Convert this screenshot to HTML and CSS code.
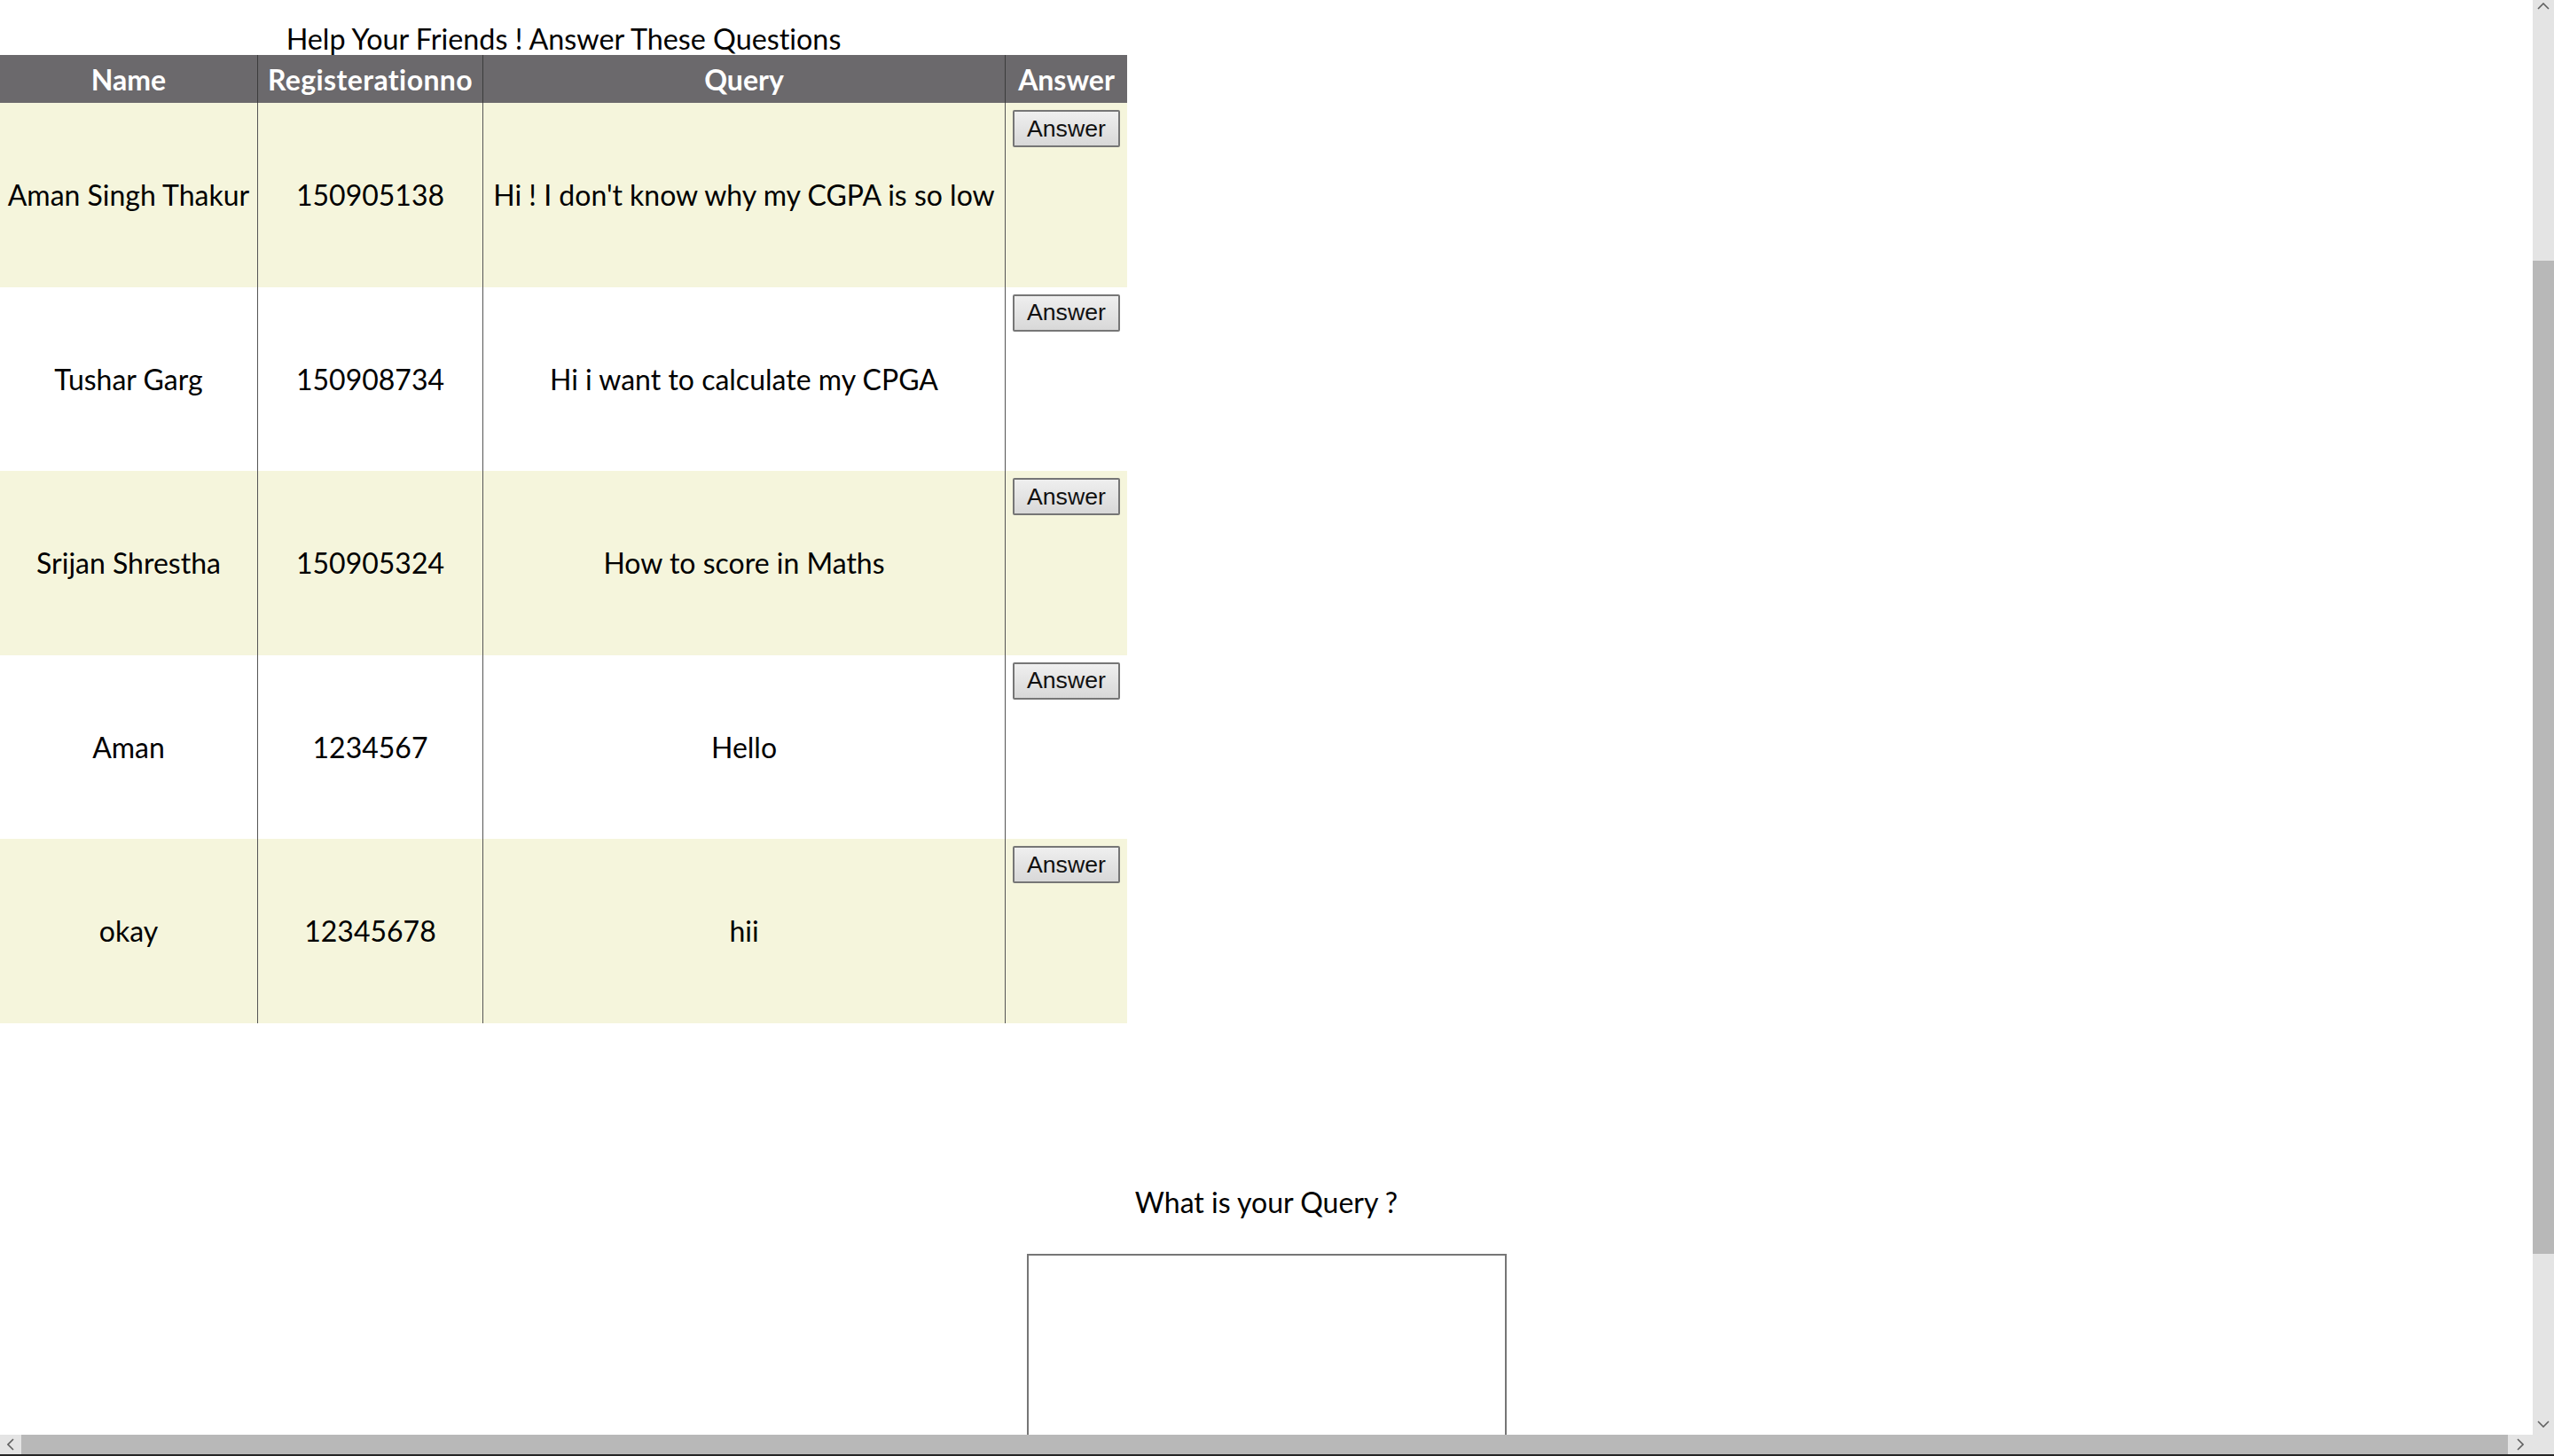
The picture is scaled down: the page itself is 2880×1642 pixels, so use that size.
FILE: index.html
```html
<!DOCTYPE html>
<html>
<head>
<meta charset="utf-8">
<title>Help Your Friends</title>
<link rel="stylesheet" href="styles.css">
</head>
<body>
<div class="main">
  <table class="questions">
    <caption>Help Your Friends ! Answer These Questions</caption>
    <thead>
      <tr>
        <th class="c-name">Name</th>
        <th class="c-reg">Registerationno</th>
        <th class="c-query">Query</th>
        <th class="c-ans">Answer</th>
      </tr>
    </thead>
    <tbody>
      <tr>
        <td>Aman Singh Thakur</td>
        <td>150905138</td>
        <td>Hi ! I don't know why my CGPA is so low</td>
        <td class="ans"><button class="btn" type="button">Answer</button></td>
      </tr>
      <tr>
        <td>Tushar Garg</td>
        <td>150908734</td>
        <td>Hi i want to calculate my CPGA</td>
        <td class="ans"><button class="btn" type="button">Answer</button></td>
      </tr>
      <tr>
        <td>Srijan Shrestha</td>
        <td>150905324</td>
        <td>How to score in Maths</td>
        <td class="ans"><button class="btn" type="button">Answer</button></td>
      </tr>
      <tr>
        <td>Aman</td>
        <td>1234567</td>
        <td>Hello</td>
        <td class="ans"><button class="btn" type="button">Answer</button></td>
      </tr>
      <tr>
        <td>okay</td>
        <td>12345678</td>
        <td>hii</td>
        <td class="ans"><button class="btn" type="button">Answer</button></td>
      </tr>
    </tbody>
  </table>

  <section class="ask">
    <p class="ask-title">What is your Query ?</p>
    <textarea class="ask-box"></textarea>
  </section>
</div>

<div class="vscroll">
  <svg class="arrow up" width="14" height="8" viewBox="0 0 14 8"><polyline points="1,7 7,1 13,7" fill="none" stroke="#606060" stroke-width="1.6"/></svg>
  <div class="vthumb"></div>
  <svg class="arrow down" width="14" height="8" viewBox="0 0 14 8"><polyline points="1,1 7,7 13,1" fill="none" stroke="#606060" stroke-width="1.6"/></svg>
</div>
<div class="hscroll">
  <div class="hbtn">
    <svg width="8" height="14" viewBox="0 0 8 14"><polyline points="7,1 1,7 7,13" fill="none" stroke="#606060" stroke-width="1.6"/></svg>
  </div>
  <div class="hthumb"></div>
  <div class="hbtn right">
    <svg width="8" height="14" viewBox="0 0 8 14"><polyline points="1,1 7,7 1,13" fill="none" stroke="#606060" stroke-width="1.6"/></svg>
  </div>
  <div class="corner"></div>
</div>
<div class="taskbar"></div>
</body>
</html>
```
FILE: styles.css
```css
html, body {
  margin: 0;
  padding: 0;
  background: #ffffff;
  overflow: hidden;
}

body {
  font-family: Lato, "Open Sans", sans-serif;
  font-size: 32px;
  color: #000;
  font-variant-ligatures: none;
}

.main {
  margin-right: 24px;
}

/* ---------- table ---------- */
.questions {
  width: 1271px;
  table-layout: fixed;
  border-collapse: separate;
  border-spacing: 0;
}

.questions caption {
  font-size: 32.3px;
  line-height: 36px;
  padding-top: 26px;
  text-align: center;
}

.questions th,
.questions td {
  box-sizing: border-box;
  padding: 0 8px;
  text-align: center;
  white-space: nowrap;
}

.questions th + th,
.questions td + td {
  border-left: 1px solid #555555;
}

.questions th {
  height: 54px;
  background: #6b696c;
  color: #ffffff;
  font-weight: 700;
  vertical-align: middle;
}

.questions th.c-reg {
  letter-spacing: 0.4px;
}

.questions th + th {
  border-left-color: #3c3c3c;
}

.c-name { width: 290px; }
.c-reg { width: 254px; }
.c-query { width: 589px; }
.c-ans { width: 138px; }

.questions td {
  height: 207.5px;
  vertical-align: middle;
}

.questions tbody tr:nth-child(odd) {
  background: #f5f5dc;
}

.questions td.ans {
  vertical-align: top;
  padding-top: 8px;
  text-align: left;
}

.btn {
  display: block;
  box-sizing: border-box;
  width: 121px;
  height: 42px;
  margin: 0;
  padding: 0 0 0 14px;
  border: 2px solid #767676;
  border-radius: 2px;
  background: linear-gradient(#efefef, #d8d8d8);
  font-family: "Liberation Sans", Arial, sans-serif;
  font-size: 26.67px;
  color: #111;
  text-align: left;
}

/* ---------- ask section ---------- */
.ask {
  display: flex;
  flex-direction: column;
  align-items: center;
  padding-top: 183px;
}

.ask-title {
  margin: 0;
  font-size: 32px;
  line-height: 38.4px;
}

.ask-box {
  display: block;
  box-sizing: border-box;
  width: 541px;
  height: 214px;
  margin-top: 39px;
  border: 2px solid #767676;
  background: #fff;
  resize: none;
}

/* ---------- fake browser scrollbars (overlay) ---------- */
.vscroll {
  position: fixed;
  top: 0;
  right: 0;
  width: 24px;
  height: 1618px;
  background: #e4e4e4;
}

.vthumb {
  position: absolute;
  left: 0;
  top: 294px;
  width: 24px;
  height: 1120px;
  background: #b8b8b8;
}

.arrow {
  position: absolute;
  left: 5px;
}
.arrow.up { top: 3px; }
.arrow.down { top: 1602px; }

.hscroll {
  position: fixed;
  left: 0;
  bottom: 2px;
  width: 100%;
  height: 22px;
  display: flex;
  background: #e4e4e4;
}

.hbtn {
  width: 24px;
  display: flex;
  align-items: center;
  justify-content: center;
}
.hbtn.right {
  width: 28px;
}

.hthumb {
  flex: 1;
  background: #b8b8b8;
}

.corner {
  width: 24px;
}

.taskbar {
  position: fixed;
  left: 0;
  bottom: 0;
  width: 100%;
  height: 2px;
  background: #262626;
}
```
